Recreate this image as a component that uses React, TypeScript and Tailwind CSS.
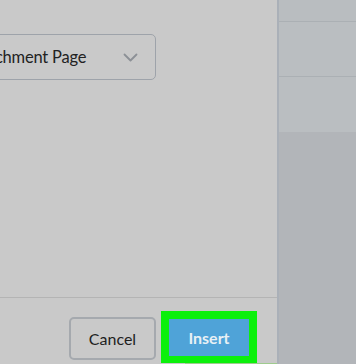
export default function App() {
  return (
    <div className="flex h-[364px] w-[356px] overflow-hidden bg-[#b2b5b9] font-['Lato','Noto_Sans',sans-serif]">
      <section className="flex w-[279px] shrink-0 flex-col border-r-2 border-[#aab0b8] bg-[#c9c9c9]">
        <div className="flex-1 pt-[34px]">
          <div className="ml-[-49px] flex h-[46px] w-[205px] items-center justify-between rounded-[5px] border border-[#9ea3aa] pl-[13px] pr-[17px]">
            <span className="text-[16.5px] tracking-[-0.2px] text-[#222]">Attachment Page</span>
            <svg width="15" height="9" viewBox="0 0 15 9" fill="none" stroke="#8c9096" strokeWidth="1.8" strokeLinecap="round" strokeLinejoin="round">
              <path d="M1.5 1.5 7.5 7.5 13.5 1.5" />
            </svg>
          </div>
        </div>

        <footer className="flex h-[67px] flex-col border-t border-[#b4b4b4]">
          <div className="flex items-start justify-end gap-[5px] pr-[20px] pt-[13px]">
            <button className="mt-[6px] h-[43px] w-[87px] rounded-[5px] border-2 border-[#a5a9ae] text-[16px] text-[#1e1e1e]">
              Cancel
            </button>
            <div className="h-[52px] w-[96px] bg-[#0cf00c] pl-[8px] pt-[8px]">
              <button className="h-[37px] w-[80px] bg-[#4fa3d8] text-[16px] font-bold text-[#e8f0f5]">Insert</button>
            </div>
          </div>
          <div className="ml-[185px] h-[2px] flex-1 bg-[#9fcb8e]" />
        </footer>
      </section>

      <aside className="flex flex-1 flex-col">
        <div className="h-[22px] border-b border-[#abb0b4] bg-[#b9bdc0]" />
        <div className="h-[55px] border-b border-[#abb0b4] bg-[#babec1]" />
        <div className="h-[55px] bg-[#babec1]" />
        <div className="flex-1 bg-[#b2b5b9]" />
      </aside>
    </div>
  );
}
